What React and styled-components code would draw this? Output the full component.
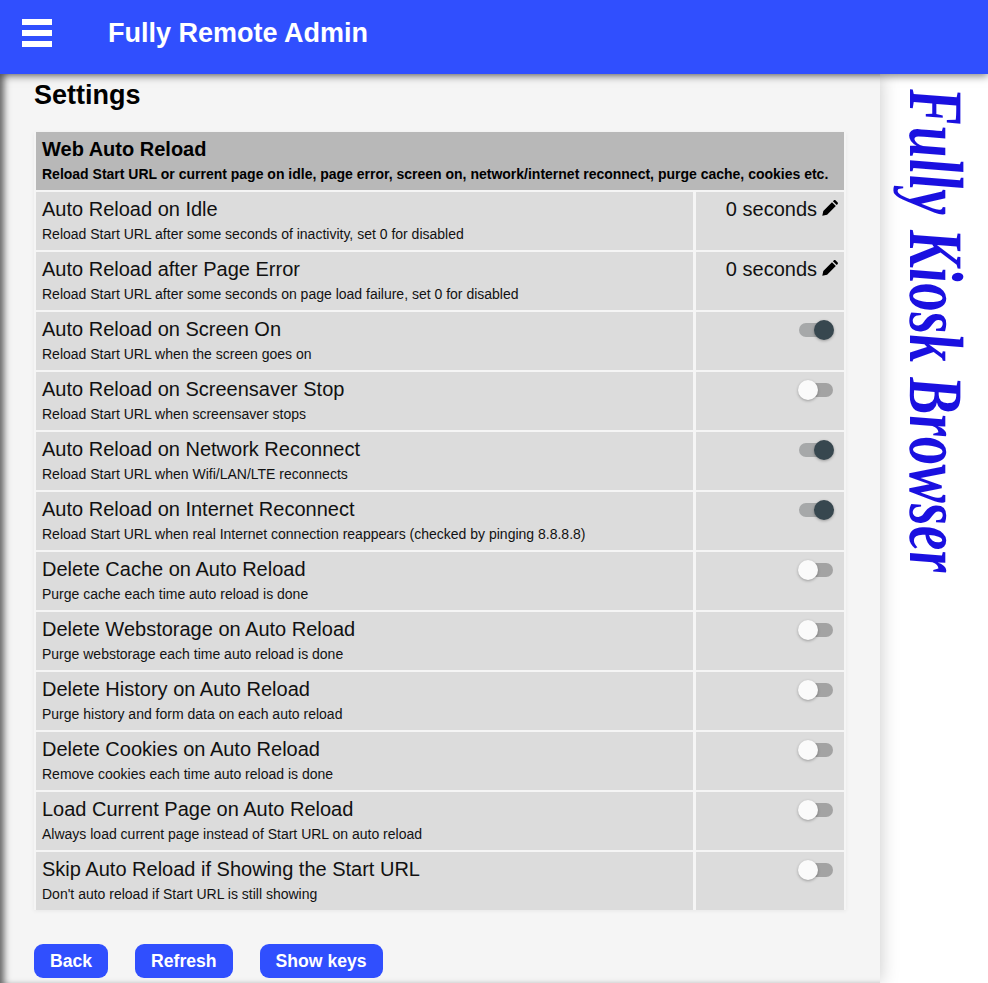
import React from "react";
import styled, { createGlobalStyle } from "styled-components";

const Global = createGlobalStyle`
  html, body { margin: 0; padding: 0; height: 983px; overflow: hidden; background: #fff; }
  body { font-family: "Liberation Sans", Arial, sans-serif; color: #000; }
  * { box-sizing: border-box; }
`;

const Page = styled.div`
  width: 988px;
  height: 983px;
  display: flex;
  flex-direction: column;
  overflow: hidden;
`;

const Header = styled.header`
  height: 74px;
  flex: none;
  display: flex;
  align-items: center;
  background: #304ffe;
  box-shadow: 0 2px 8px rgba(0, 0, 0, 0.5);
  position: relative;
  z-index: 2;
  padding: 0 0 8px 22px;
`;

const Burger = styled.div`
  width: 30px;
  display: flex;
  flex-direction: column;
  gap: 5px;
  margin-right: 56px;
`;

const BurgerBar = styled.span`
  height: 6px;
  background: #fff;
`;

const Brand = styled.h1`
  margin: 0;
  font-size: 27px;
  line-height: 32px;
  font-weight: 700;
  color: #fff;
`;

const Body = styled.div`
  flex: 1;
  display: flex;
  min-height: 0;
`;

const Main = styled.main`
  width: 880px;
  flex: none;
  background: #f5f5f5;
  padding: 4px 34px 0;
  position: relative;
  z-index: 1;
  box-shadow: inset 7px 0 7px -3px rgba(0, 0, 0, 0.6), 0 0 18px rgba(0, 0, 0, 0.22);
`;

const Title = styled.h2`
  margin: 0 0 20px;
  font-size: 27px;
  line-height: 34px;
  font-weight: 700;
`;

const Table = styled.section`
  width: 812px;
  display: grid;
  gap: 2px;
  padding: 0 2px;
  box-shadow: 0 1px 4px rgba(0, 0, 0, 0.06);
`;

const Group = styled.div`
  height: 58px;
  background: #b8b8b8;
  padding: 4px 6px 0;
`;

const GroupTitle = styled.div`
  font-size: 20px;
  line-height: 26px;
  font-weight: 700;
`;

const GroupText = styled.div`
  font-size: 14px;
  line-height: 20px;
  margin-top: 2px;
  font-weight: 700;
`;

const Row = styled.div`
  display: grid;
  grid-template-columns: 657px 148px;
  column-gap: 3px;
  height: 58px;
`;

const Label = styled.div`
  background: #dcdcdc;
  padding: 5px 6px 0;
`;

const RowTitle = styled.div`
  font-size: 20px;
  line-height: 24px;
  color: #111;
`;

const RowText = styled.div`
  font-size: 14px;
  line-height: 18px;
  margin-top: 4px;
  color: #111;
`;

const Value = styled.div`
  background: #dcdcdc;
  display: flex;
  justify-content: flex-end;
  align-items: flex-start;
  padding: 5px 6px 0 0;
  font-size: 20px;
  line-height: 24px;
  color: #111;
  gap: 5px;
`;

const Pencil = styled.svg`
  width: 16px;
  height: 16px;
  margin-top: 3px;
  fill: #000;
  flex: none;
`;

const Track = styled.div`
  width: 34px;
  height: 14px;
  margin: 6px 5px 0 0;
  border-radius: 7px;
  background: ${(p) => (p.$on ? "#a6a8a9" : "#a3a3a3")};
  position: relative;
`;

const Thumb = styled.span`
  position: absolute;
  top: -3px;
  left: ${(p) => (p.$on ? "15px" : "-1px")};
  width: 20px;
  height: 20px;
  border-radius: 50%;
  background: ${(p) => (p.$on ? "#37474f" : "#fafafa")};
  box-shadow: 0 1px 3px rgba(0, 0, 0, 0.3);
`;

const Actions = styled.div`
  display: flex;
  gap: 27px;
  margin-top: 34px;
`;

const Button = styled.button`
  height: 34px;
  padding: 0 16px;
  border: 0;
  border-radius: 9px;
  background: #304ffe;
  color: #fff;
  font-family: inherit;
  font-size: 17.6px;
  font-weight: 700;
`;

const Aside = styled.aside`
  flex: 1;
  background: #fff;
  display: flex;
  justify-content: center;
  padding: 14px 0 0 4px;
`;

const Logo = styled.div`
  writing-mode: vertical-rl;
  font-family: "Liberation Serif", serif;
  font-style: italic;
  font-weight: 700;
  font-size: 57px;
  line-height: 70px;
  color: #1a10e0;
  white-space: nowrap;
  height: 490px;
  transform: scaleX(1.35) skewY(-4deg);
  transform-origin: center top;
`;

const rows = [
  ["Auto Reload on Idle", "Reload Start URL after some seconds of inactivity, set 0 for disabled", "sec"],
  ["Auto Reload after Page Error", "Reload Start URL after some seconds on page load failure, set 0 for disabled", "sec"],
  ["Auto Reload on Screen On", "Reload Start URL when the screen goes on", true],
  ["Auto Reload on Screensaver Stop", "Reload Start URL when screensaver stops", false],
  ["Auto Reload on Network Reconnect", "Reload Start URL when Wifi/LAN/LTE reconnects", true],
  ["Auto Reload on Internet Reconnect", "Reload Start URL when real Internet connection reappears (checked by pinging 8.8.8.8)", true],
  ["Delete Cache on Auto Reload", "Purge cache each time auto reload is done", false],
  ["Delete Webstorage on Auto Reload", "Purge webstorage each time auto reload is done", false],
  ["Delete History on Auto Reload", "Purge history and form data on each auto reload", false],
  ["Delete Cookies on Auto Reload", "Remove cookies each time auto reload is done", false],
  ["Load Current Page on Auto Reload", "Always load current page instead of Start URL on auto reload", false],
  ["Skip Auto Reload if Showing the Start URL", "Don't auto reload if Start URL is still showing", false],
];

export default function App() {
  return (
    <Page>
      <Global />
      <Header>
        <Burger>
          <BurgerBar />
          <BurgerBar />
          <BurgerBar />
        </Burger>
        <Brand>Fully Remote Admin</Brand>
      </Header>
      <Body>
        <Main>
          <Title>Settings</Title>
          <Table>
            <Group>
              <GroupTitle>Web Auto Reload</GroupTitle>
              <GroupText>
                Reload Start URL or current page on idle, page error, screen on, network/internet reconnect, purge cache, cookies etc.
              </GroupText>
            </Group>
            {rows.map(([title, text, value]) => (
              <Row key={title}>
                <Label>
                  <RowTitle>{title}</RowTitle>
                  <RowText>{text}</RowText>
                </Label>
                <Value>
                  {value === "sec" ? (
                    <>
                      0 seconds
                      <Pencil viewBox="0 0 16 16">
                        <path d="M0.3 15.7 1.3 10.9 10 2.2l3.8 3.8-8.7 8.7zM10.9 1.3l.8-.8c.6-.6 1.4-.6 2 0l1.8 1.8c.6.6.6 1.4 0 2l-.8.8z" />
                      </Pencil>
                    </>
                  ) : (
                    <Track $on={value}>
                      <Thumb $on={value} />
                    </Track>
                  )}
                </Value>
              </Row>
            ))}
          </Table>
          <Actions>
            <Button>Back</Button>
            <Button>Refresh</Button>
            <Button>Show keys</Button>
          </Actions>
        </Main>
        <Aside>
          <Logo>Fully Kiosk Browser</Logo>
        </Aside>
      </Body>
    </Page>
  );
}
